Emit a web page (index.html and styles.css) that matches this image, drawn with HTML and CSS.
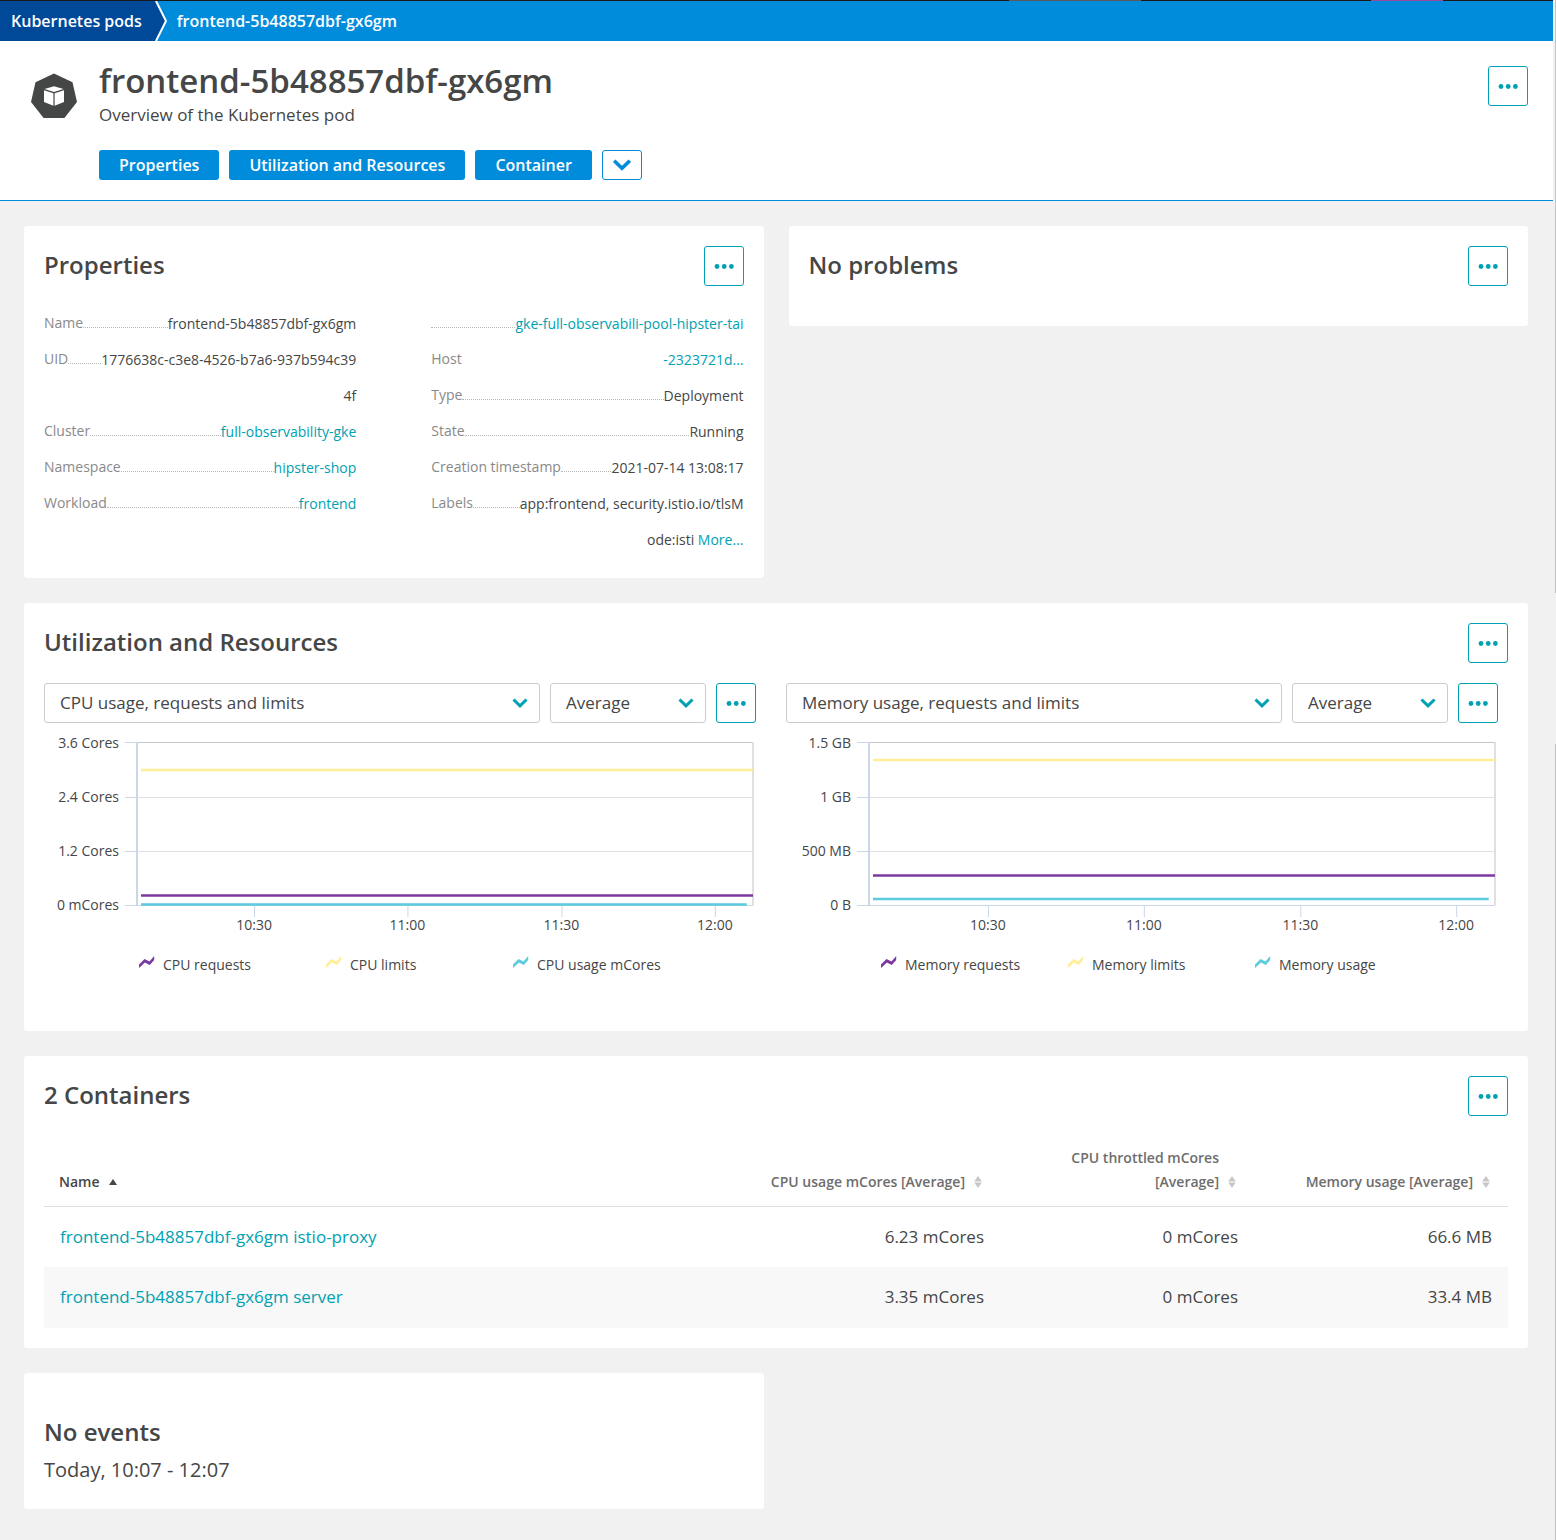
FILE: index.html
```html
<!DOCTYPE html>
<html lang="en">
<head>
    <meta charset="UTF-8">
    <meta name="viewport" content="width=device-width, initial-scale=1.0">
    <title>frontend-5b48857dbf-gx6gm</title>
    <link rel="stylesheet" href="styles.css">
</head>
<body>
    <svg class="sprite" aria-hidden="true">
        <symbol id="dots" viewBox="0 0 20 6">
            <circle cx="3" cy="3.5" r="2.4"/>
            <circle cx="10.2" cy="3.5" r="2.4"/>
            <circle cx="17.4" cy="3.5" r="2.4"/>
        </symbol>
        <symbol id="chevron" viewBox="0 0 16 10">
            <path d="M1.5 1.5 8 7.8 14.5 1.5" fill="none" stroke="currentColor" stroke-width="3"/>
        </symbol>
        <symbol id="series" viewBox="0 0 16 12">
            <path d="M0 8.5 5.5 3 10.5 5.4 15.2 0V4L10.8 9 5.9 6.6 0 12Z"/>
        </symbol>
        <symbol id="sort" viewBox="0 0 8 12">
            <path d="M4 0 7.8 5.4H.2ZM4 12 .2 6.6H7.8Z"/>
        </symbol>
        <symbol id="sort-up" viewBox="0 0 8 6">
            <path d="M4 0 8 6H0Z"/>
        </symbol>
    </svg>

    <div class="page">
        <nav class="breadcrumb" aria-label="Breadcrumb">
            <a class="crumb parent" href="#">Kubernetes pods</a>
            <svg class="arrow" viewBox="0 0 14 40" aria-hidden="true">
                <path class="arrow-fill" d="M0 0 11 20 0 40Z"/>
                <path class="arrow-line" d="M1 0 11 20 1 40"/>
            </svg>
            <a class="crumb" href="#">frontend-5b48857dbf-gx6gm</a>
        </nav>

        <header class="header">
            <svg class="pod-icon" viewBox="0 0 46 46" aria-hidden="true">
                <path class="pod-shape" d="M23 .5 41.5 9.2 46 29 33.4 45H12.6L0 29 4.5 9.2Z"/>
                <path class="pod-cube" d="M23 13.2 32.5 16 23 19 13.5 16ZM13 17.3 22.4 20.2V32.8L13 29ZM33 17.3 23.6 20.2V32.8L33 29Z"/>
            </svg>
            <div class="header-text">
                <h1>frontend-5b48857dbf-gx6gm</h1>
                <p>Overview of the Kubernetes pod</p>
                <div class="jump">
                    <a href="#properties">Properties</a>
                    <a href="#utilization">Utilization and Resources</a>
                    <a href="#containers">Container</a>
                    <button class="jump-more" aria-label="More sections"><svg><use href="#chevron"/></svg></button>
                </div>
            </div>
            <button class="more" aria-label="More actions"><svg><use href="#dots"/></svg></button>
        </header>

        <main>
            <section class="card" id="properties">
                <div class="card-head">
                    <h2>Properties</h2>
                    <button class="more" aria-label="Properties actions"><svg><use href="#dots"/></svg></button>
                </div>
                <div class="properties">
                    <dl>
                        <div><dt>Name</dt><dd>frontend-5b48857dbf-gx6gm</dd></div>
                        <div><dt>UID</dt><dd>1776638c-c3e8-4526-b7a6-937b594c39<br>4f</dd></div>
                        <div><dt>Cluster</dt><dd><a href="#">full-observability-gke</a></dd></div>
                        <div><dt>Namespace</dt><dd><a href="#">hipster-shop</a></dd></div>
                        <div><dt>Workload</dt><dd><a href="#">frontend</a></dd></div>
                    </dl>
                    <dl>
                        <div class="host"><dt>Host</dt><dd><a href="#">gke-full-observabili-pool-hipster-tai<br>-2323721d...</a></dd></div>
                        <div><dt>Type</dt><dd>Deployment</dd></div>
                        <div><dt>State</dt><dd>Running</dd></div>
                        <div><dt>Creation timestamp</dt><dd>2021-07-14 13:08:17</dd></div>
                        <div><dt>Labels</dt><dd>app:frontend, security.istio.io/tlsM<br>ode:isti <a href="#">More...</a></dd></div>
                    </dl>
                </div>
            </section>

            <section class="card">
                <div class="card-head">
                    <h2>No problems</h2>
                    <button class="more" aria-label="Problems actions"><svg><use href="#dots"/></svg></button>
                </div>
            </section>

            <section class="card wide" id="utilization">
                <div class="card-head">
                    <h2>Utilization and Resources</h2>
                    <button class="more" aria-label="Utilization actions"><svg><use href="#dots"/></svg></button>
                </div>
                <div class="charts">
                    <div>
                        <div class="controls">
                            <div class="select">
                                <select aria-label="CPU metric"><option>CPU usage, requests and limits</option></select>
                                <svg><use href="#chevron"/></svg>
                            </div>
                            <div class="select small">
                                <select aria-label="CPU aggregation"><option>Average</option></select>
                                <svg><use href="#chevron"/></svg>
                            </div>
                            <button class="more" aria-label="CPU chart actions"><svg><use href="#dots"/></svg></button>
                        </div>
                        <div class="chart cpu">
                            <div class="y-axis">
                                <span>3.6 Cores</span>
                                <span>2.4 Cores</span>
                                <span>1.2 Cores</span>
                                <span>0 mCores</span>
                            </div>
                            <svg class="plot" role="img" aria-label="CPU usage, requests and limits">
                                <g class="grid">
                                    <rect class="top" width="100%" height="1"/>
                                    <rect y="55" width="100%" height="1"/>
                                    <rect y="109" width="100%" height="1"/>
                                </g>
                                <line class="right" x1="100%" x2="100%" y1="0" y2="163"/>
                                <g class="axis">
                                    <rect x="-1" width="2" height="164"/>
                                    <rect y="163" width="100%" height="1"/>
                                    <rect x="-12" width="12" height="1"/>
                                    <rect x="-12" y="55" width="12" height="1"/>
                                    <rect x="-12" y="109" width="12" height="1"/>
                                    <rect x="-12" y="163" width="12" height="1"/>
                                    <rect x="19%" y="163" width="1" height="12"/>
                                    <rect x="43.9%" y="163" width="1" height="12"/>
                                    <rect x="68.9%" y="163" width="1" height="12"/>
                                    <rect x="93.8%" y="163" width="1" height="12"/>
                                </g>
                                <line class="limits" x1="4" x2="100%" y1="28" y2="28"/>
                                <line class="requests" x1="4" x2="100%" y1="153.5" y2="153.5"/>
                                <line class="usage" x1="4" x2="99%" y1="162.5" y2="162.5"/>
                                <g class="times">
                                    <text x="19%" y="188">10:30</text>
                                    <text x="43.9%" y="188">11:00</text>
                                    <text x="68.9%" y="188">11:30</text>
                                    <text x="93.8%" y="188">12:00</text>
                                </g>
                            </svg>
                        </div>
                        <ul class="legend">
                            <li><svg class="requests"><use href="#series"/></svg>CPU requests</li>
                            <li><svg class="limits"><use href="#series"/></svg>CPU limits</li>
                            <li><svg class="usage"><use href="#series"/></svg>CPU usage mCores</li>
                        </ul>
                    </div>

                    <div>
                        <div class="controls">
                            <div class="select">
                                <select aria-label="Memory metric"><option>Memory usage, requests and limits</option></select>
                                <svg><use href="#chevron"/></svg>
                            </div>
                            <div class="select small">
                                <select aria-label="Memory aggregation"><option>Average</option></select>
                                <svg><use href="#chevron"/></svg>
                            </div>
                            <button class="more" aria-label="Memory chart actions"><svg><use href="#dots"/></svg></button>
                        </div>
                        <div class="chart memory">
                            <div class="y-axis">
                                <span>1.5 GB</span>
                                <span>1 GB</span>
                                <span>500 MB</span>
                                <span>0 B</span>
                            </div>
                            <svg class="plot" role="img" aria-label="Memory usage, requests and limits">
                                <g class="grid">
                                    <rect class="top" width="100%" height="1"/>
                                    <rect y="55" width="100%" height="1"/>
                                    <rect y="109" width="100%" height="1"/>
                                </g>
                                <line class="right" x1="100%" x2="100%" y1="0" y2="163"/>
                                <g class="axis">
                                    <rect x="-1" width="2" height="164"/>
                                    <rect y="163" width="100%" height="1"/>
                                    <rect x="-12" width="12" height="1"/>
                                    <rect x="-12" y="55" width="12" height="1"/>
                                    <rect x="-12" y="109" width="12" height="1"/>
                                    <rect x="-12" y="163" width="12" height="1"/>
                                    <rect x="19%" y="163" width="1" height="12"/>
                                    <rect x="43.9%" y="163" width="1" height="12"/>
                                    <rect x="68.9%" y="163" width="1" height="12"/>
                                    <rect x="93.8%" y="163" width="1" height="12"/>
                                </g>
                                <line class="limits" x1="4" x2="100%" y1="18" y2="18"/>
                                <line class="requests" x1="4" x2="100%" y1="133.5" y2="133.5"/>
                                <line class="usage" x1="4" x2="99%" y1="157" y2="157"/>
                                <g class="times">
                                    <text x="19%" y="188">10:30</text>
                                    <text x="43.9%" y="188">11:00</text>
                                    <text x="68.9%" y="188">11:30</text>
                                    <text x="93.8%" y="188">12:00</text>
                                </g>
                            </svg>
                        </div>
                        <ul class="legend">
                            <li><svg class="requests"><use href="#series"/></svg>Memory requests</li>
                            <li><svg class="limits"><use href="#series"/></svg>Memory limits</li>
                            <li><svg class="usage"><use href="#series"/></svg>Memory usage</li>
                        </ul>
                    </div>
                </div>
            </section>

            <section class="card wide" id="containers">
                <div class="card-head">
                    <h2>2 Containers</h2>
                    <button class="more" aria-label="Containers actions"><svg><use href="#dots"/></svg></button>
                </div>
                <table>
                    <thead>
                        <tr>
                            <th class="sorted" aria-sort="ascending"><button>Name <svg class="up"><use href="#sort-up"/></svg></button></th>
                            <th><button>CPU usage mCores [Average] <svg><use href="#sort"/></svg></button></th>
                            <th><button>CPU throttled mCores<br>[Average] <svg><use href="#sort"/></svg></button></th>
                            <th><button>Memory usage [Average] <svg><use href="#sort"/></svg></button></th>
                        </tr>
                    </thead>
                    <tbody>
                        <tr>
                            <td><a href="#">frontend-5b48857dbf-gx6gm istio-proxy</a></td>
                            <td>6.23 mCores</td>
                            <td>0 mCores</td>
                            <td>66.6 MB</td>
                        </tr>
                        <tr>
                            <td><a href="#">frontend-5b48857dbf-gx6gm server</a></td>
                            <td>3.35 mCores</td>
                            <td>0 mCores</td>
                            <td>33.4 MB</td>
                        </tr>
                    </tbody>
                </table>
            </section>

            <section class="card events">
                <h2>No events</h2>
                <p>Today, 10:07 - 12:07</p>
            </section>
        </main>
    </div>
    <div class="rail"></div>
</body>
</html>
```
FILE: styles.css
```css
* {
    box-sizing: border-box;
}
body {
    display: grid;
    grid-template-columns: 1fr 1px;
    column-gap: 2px;
    min-height: 100vh;
    margin: 0;
    background-color: #f1f1f1;
    color: #454646;
    font-family: "Open Sans", "Noto Sans", sans-serif;
    font-size: 17px;
    line-height: 24px;
}
h1, h2, p, dl, dd, ul {
    margin: 0;
    padding: 0;
}
h1, h2 {
    font-weight: 600;
}
a {
    color: #00a1b2;
    text-decoration: none;
}
button, select {
    font: inherit;
    color: inherit;
    cursor: pointer;
}
.sprite {
    position: absolute;
    width: 0;
    height: 0;
}
.rail {
    background: linear-gradient(#c4c4c4 593px, #f1f1f1 593px, #f1f1f1 744px, #c4c4c4 744px);
}

/* breadcrumb */
.page {
    min-width: 0;
    background: linear-gradient(90deg, #191919 65%, #5b5b5b 65%, #5b5b5b 73.5%, #191919 73.5%, #191919 88.3%, #9a4aa0 88.3%, #9a4aa0 92.9%, #191919 92.9%) top / 100% 1px no-repeat;
    padding-top: 1px;
}
.breadcrumb {
    display: flex;
    height: 40px;
    background-color: #008cdb;
}
.crumb {
    color: #fff;
    font-size: 16px;
    font-weight: 600;
    line-height: 40px;
    padding-left: 8px;
}
.crumb.parent {
    background-color: #004999;
    padding: 0 13px 0 11px;
}
.arrow {
    width: 14px;
    height: 40px;
}
.arrow-fill {
    fill: #004999;
}
.arrow-line {
    fill: none;
    stroke: #fff;
    stroke-width: 2;
}

/* header */
.header {
    display: flex;
    align-items: flex-start;
    height: 160px;
    padding: 25px 25px 0 31px;
    background-color: #fff;
    border-bottom: 1px solid #008cdb;
}
.pod-icon {
    width: 46px;
    height: 46px;
    margin: 7px 22px 0 0;
}
.pod-shape {
    fill: #454646;
    stroke-linejoin: round;
}
.pod-cube {
    fill: #fff;
}
.header-text {
    flex: 1;
}
h1 {
    font-size: 33px;
    line-height: 30px;
}
.header-text p {
    margin-top: 7px;
}
.jump {
    display: flex;
    gap: 10px;
    margin-top: 23px;
}
.jump a {
    padding: 0 20px;
    border-radius: 3px;
    background-color: #008cdb;
    color: #fff;
    font-size: 16px;
    font-weight: 600;
    line-height: 30px;
}
.jump-more {
    display: grid;
    place-items: center;
    width: 40px;
    height: 30px;
    padding: 0;
    border: 1px solid #008cdb;
    border-radius: 3px;
    background-color: #fff;
    color: #008cdb;
}
.jump-more svg {
    width: 20px;
    height: 12px;
}
.more {
    display: grid;
    place-items: center;
    flex: none;
    width: 40px;
    height: 40px;
    padding: 0;
    border: 1px solid #00a1b2;
    border-radius: 3px;
    background-color: #fff;
}
.more svg {
    width: 20px;
    height: 6px;
    fill: #00a1b2;
}

/* cards */
main {
    display: grid;
    grid-template-columns: 1fr 1fr;
    align-items: start;
    gap: 25px;
    padding: 25px 25px 31px 24px;
}
.card {
    min-width: 0;
    padding: 20px;
    border-radius: 3px;
    background-color: #fff;
}
.wide {
    grid-column: 1 / -1;
}
.card-head {
    display: flex;
    justify-content: space-between;
    margin-bottom: 20px;
}
h2 {
    font-size: 24px;
    line-height: 38px;
}

/* properties */
.properties {
    display: grid;
    grid-template-columns: 1fr 1fr;
    column-gap: 75px;
    font-size: 14px;
    line-height: 36px;
}
.properties dl > div {
    display: flex;
}
.properties dl > div::before {
    content: "";
    order: 1;
    flex: 1;
    height: 21px;
    border-bottom: 1px dotted #b7b7b7;
}
dt {
    color: #898989;
    line-height: 34px;
}
dd {
    order: 2;
    text-align: right;
}
/* the label sits on the second line of the value */
.properties .host {
    position: relative;
}
.properties .host dt {
    position: absolute;
    bottom: 2px;
}

/* charts */
.charts {
    display: grid;
    grid-template-columns: 1fr 1fr;
    column-gap: 30px;
    padding: 0 10px 34px 0;
}
.controls {
    display: flex;
    gap: 10px;
}
.select {
    display: grid;
    flex: 1;
    align-items: center;
}
.select.small {
    flex: 0 0 156px;
}
.select select, .select svg {
    grid-area: 1 / 1;
}
.select select {
    appearance: none;
    width: 100%;
    height: 40px;
    padding: 0 15px;
    border: 1px solid #cccccc;
    border-radius: 3px;
    background-color: #fff;
}
.select svg {
    justify-self: end;
    width: 16px;
    height: 10px;
    margin-right: 12px;
    color: #00a1b2;
    pointer-events: none;
}
.chart {
    display: grid;
    column-gap: 18px;
    margin-top: 11px;
    padding-right: 3px;
    font-size: 14px;
}
.cpu {
    grid-template-columns: 75px 1fr;
}
.memory {
    grid-template-columns: 65px 1fr;
}
.y-axis {
    display: flex;
    flex-direction: column;
    justify-content: space-between;
    height: 180px;
    line-height: 18px;
    text-align: right;
}
.plot {
    width: 100%;
    height: 195px;
    margin-top: 8px;
    overflow: visible;
}
.plot line {
    stroke-width: 2.5;
}
.plot .right {
    stroke: #e0e0e0;
    stroke-width: 2;
}
.grid {
    fill: #e0e0e0;
}
.grid .top {
    fill: #c7c7c7;
}
.axis {
    fill: #c9d7e8;
}
.times {
    fill: #454646;
    text-anchor: middle;
}
.requests {
    fill: #7c38a1;
    stroke: #7c38a1;
}
.limits {
    fill: #ffee99;
    stroke: #ffee99;
}
.usage {
    fill: #5bcbdd;
    stroke: #5bcbdd;
}
.legend {
    display: grid;
    grid-template-columns: repeat(3, 187px);
    margin-top: 16px;
    padding-left: 95px;
    list-style: none;
    font-size: 14px;
    line-height: 24px;
}
.legend svg {
    width: 16px;
    height: 12px;
    margin-right: 8px;
    vertical-align: 2px;
    stroke: none;
}

/* containers */
table {
    width: 100%;
    border-collapse: collapse;
    table-layout: fixed;
}
th {
    padding: 9px 18px 12px 15px;
    border-bottom: 1px solid #e0e0e0;
    text-align: right;
    vertical-align: bottom;
}
th:nth-child(3), th:nth-child(4) {
    width: 254px;
}
th:nth-child(2) {
    width: 280px;
}
th button {
    display: inline-flex;
    align-items: flex-end;
    gap: 9px;
    padding: 0;
    border: none;
    background: none;
    color: #6d6d6d;
    font-size: 14px;
    font-weight: 600;
    text-align: right;
}
th svg {
    width: 8px;
    height: 12px;
    margin-bottom: 6px;
    fill: #c7c7c7;
}
th .up {
    height: 6px;
    margin-bottom: 9px;
    fill: #454646;
}
.sorted {
    text-align: left;
}
.sorted button {
    color: #454646;
}
td {
    height: 60px;
    padding: 0 16px;
    text-align: right;
}
td:first-child {
    text-align: left;
}
tbody tr:nth-child(even) {
    background-color: #f8f8f8;
}
tbody tr:last-child td {
    height: 61px;
}

/* events */
.events {
    padding-top: 40px;
}
.events p {
    font-size: 20px;
    line-height: 38px;
}
```
